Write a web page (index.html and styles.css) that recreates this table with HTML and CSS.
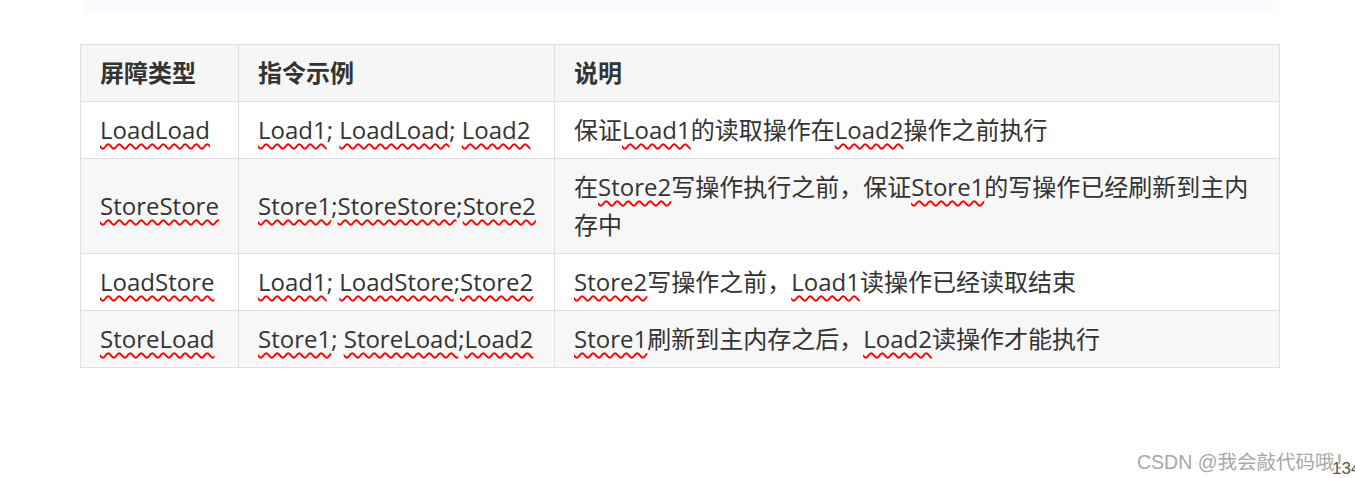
FILE: index.html
```html
<!DOCTYPE html>
<html>
<head>
  <meta charset="UTF-8">
  <title>内存屏障</title>
  <link rel="stylesheet" href="styles.css">
</head>
<body>
  <div class="top-band"></div>

  <table class="barrier-table">
    <colgroup>
      <col class="col-type">
      <col class="col-example">
      <col class="col-desc">
    </colgroup>
    <thead>
      <tr>
        <th>屏障类型</th>
        <th>指令示例</th>
        <th>说明</th>
      </tr>
    </thead>
    <tbody>
      <tr>
        <td><span class="sp">LoadLoad</span></td>
        <td><span class="sp">Load1</span>; <span class="sp">LoadLoad</span>; <span class="sp">Load2</span></td>
        <td>保证<span class="sp">Load1</span>的读取操作在<span class="sp">Load2</span>操作之前执行</td>
      </tr>
      <tr>
        <td><span class="sp">StoreStore</span></td>
        <td><span class="sp">Store1</span>;<span class="sp">StoreStore</span>;<span class="sp">Store2</span></td>
        <td>在<span class="sp">Store2</span>写操作执行之前，保证<span class="sp">Store1</span>的写操作已经刷新到主内存中</td>
      </tr>
      <tr>
        <td><span class="sp">LoadStore</span></td>
        <td><span class="sp">Load1</span>; <span class="sp">LoadStore</span>;<span class="sp">Store2</span></td>
        <td><span class="sp">Store2</span>写操作之前，<span class="sp">Load1</span>读操作已经读取结束</td>
      </tr>
      <tr>
        <td><span class="sp">StoreLoad</span></td>
        <td><span class="sp">Store1</span>; <span class="sp">StoreLoad</span>;<span class="sp">Load2</span></td>
        <td><span class="sp">Store1</span>刷新到主内存之后，<span class="sp">Load2</span>读操作才能执行</td>
      </tr>
    </tbody>
  </table>

  <div class="watermark">CSDN @我会敲代码哦！</div>
  <div class="page-num">134</div>
</body>
</html>
```

FILE: styles.css
```css
body {
  margin: 0;
  background-color: #ffffff;
  font-family: "Open Sans", "Noto Sans CJK SC", sans-serif;
  color: #333;
  position: relative;
  height: 478px;
  overflow: hidden;
}
.top-band {
  margin-left: 83px;
  width: 1190px;
  height: 14px;
  background-color: #fafbfe;
}
.barrier-table {
  margin: 30px 0 0 80px;
  width: 1200px;
  border-collapse: collapse;
  table-layout: fixed;
  font-size: 24px;
  line-height: 38px;
}
.col-type {
  width: 158px;
}
.col-example {
  width: 316px;
}
.barrier-table th,
.barrier-table td {
  border: 1px solid #dddfe3;
  padding: 9px 19px;
  text-align: left;
  vertical-align: middle;
}
.barrier-table th {
  font-weight: bold;
  background-color: #f6f6f6;
  color: #333;
}
.barrier-table tbody tr:nth-child(even) {
  background-color: #f7f7f7;
}
/* spellcheck squiggles as in the screenshot */
.sp {
  text-decoration: underline wavy #f00;
  text-decoration-thickness: 1.5px;
  text-underline-offset: 4px;
  text-decoration-skip-ink: none;
}
.watermark {
  position: absolute;
  left: 1137px;
  top: 446px;
  font-family: "Liberation Sans", "Noto Sans CJK SC", sans-serif;
  font-size: 19.5px;
  color: #a8a8a8;
  white-space: nowrap;
}
.page-num {
  position: absolute;
  left: 1332px;
  top: 459px;
  font-family: "Liberation Sans", sans-serif;
  font-size: 17px;
  color: #555;
}
```
